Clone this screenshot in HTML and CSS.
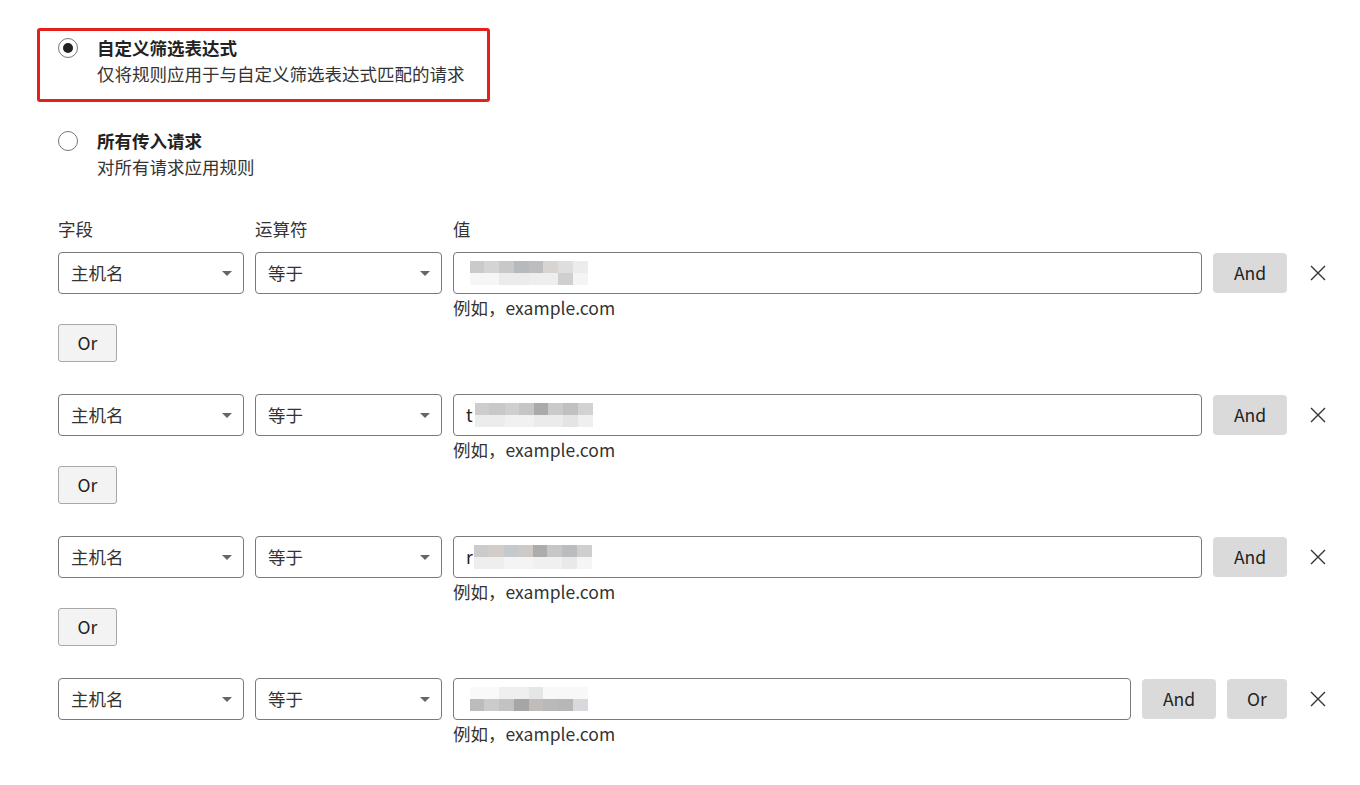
FILE: index.html
```html
<!DOCTYPE html>
<html lang="zh-CN">
<head>
  <meta charset="UTF-8">
  <meta name="viewport" content="width=device-width, initial-scale=1.0">
  <title>自定义筛选表达式</title>
  <link rel="stylesheet" href="styles.css">
</head>
<body>
  <div class="page">
    <div class="options">
      <label class="option selected">
        <span class="radio checked"></span>
        <span class="option-text">
          <span class="option-title">自定义筛选表达式</span>
          <span class="option-desc">仅将规则应用于与自定义筛选表达式匹配的请求</span>
        </span>
      </label>
      <label class="option">
        <span class="radio"></span>
        <span class="option-text">
          <span class="option-title">所有传入请求</span>
          <span class="option-desc">对所有请求应用规则</span>
        </span>
      </label>
    </div>

    <div class="builder">
      <div class="labels">
        <span class="col-field">字段</span>
        <span class="col-op">运算符</span>
        <span class="col-value">值</span>
      </div>

      <div class="group">
        <div class="row">
          <div class="select col-field">主机名<span class="caret"></span></div>
          <div class="select col-op">等于<span class="caret"></span></div>
          <div class="col-value">
            <div class="input"><span class="masked m1"></span></div>
            <div class="hint">例如，example.com</div>
          </div>
          <button class="btn btn-and">And</button>
          <button class="remove"><svg width="16" height="16" viewBox="0 0 16 16"><path d="M1 1L15 15M15 1L1 15" stroke="#333" stroke-width="1.4" fill="none"/></svg></button>
        </div>
        <button class="btn-or">Or</button>
      </div>

      <div class="group">
        <div class="row">
          <div class="select col-field">主机名<span class="caret"></span></div>
          <div class="select col-op">等于<span class="caret"></span></div>
          <div class="col-value">
            <div class="input">t<span class="masked m2"></span></div>
            <div class="hint">例如，example.com</div>
          </div>
          <button class="btn btn-and">And</button>
          <button class="remove"><svg width="16" height="16" viewBox="0 0 16 16"><path d="M1 1L15 15M15 1L1 15" stroke="#333" stroke-width="1.4" fill="none"/></svg></button>
        </div>
        <button class="btn-or">Or</button>
      </div>

      <div class="group">
        <div class="row">
          <div class="select col-field">主机名<span class="caret"></span></div>
          <div class="select col-op">等于<span class="caret"></span></div>
          <div class="col-value">
            <div class="input">r<span class="masked m3"></span></div>
            <div class="hint">例如，example.com</div>
          </div>
          <button class="btn btn-and">And</button>
          <button class="remove"><svg width="16" height="16" viewBox="0 0 16 16"><path d="M1 1L15 15M15 1L1 15" stroke="#333" stroke-width="1.4" fill="none"/></svg></button>
        </div>
        <button class="btn-or">Or</button>
      </div>

      <div class="group last">
        <div class="row">
          <div class="select col-field">主机名<span class="caret"></span></div>
          <div class="select col-op">等于<span class="caret"></span></div>
          <div class="col-value">
            <div class="input"><span class="masked m4"></span></div>
            <div class="hint">例如，example.com</div>
          </div>
          <button class="btn btn-and">And</button>
          <button class="btn btn-or-inline">Or</button>
          <button class="remove"><svg width="16" height="16" viewBox="0 0 16 16"><path d="M1 1L15 15M15 1L1 15" stroke="#333" stroke-width="1.4" fill="none"/></svg></button>
        </div>
      </div>
    </div>
  </div>
</body>
</html>
```

FILE: styles.css
```css
body {
  margin: 0;
  background: #fff;
  color: #333;
  font-family: "Noto Sans CJK SC", "Liberation Sans", sans-serif;
  font-size: 17.5px;
  line-height: 26px;
}

.page {
  padding: 28px 22px 0 37px;
}

/** Radio options **/

.options {
  display: flex;
  flex-direction: column;
  gap: 19px;
}

.option {
  display: flex;
  align-items: flex-start;
  gap: 19px;
  width: 453px;
  box-sizing: border-box;
  padding: 4px 0 12px 18px;
  border: 3px solid transparent;
  border-radius: 3px;
}

.option.selected {
  border-color: #e3211b;
}

.radio {
  flex: none;
  width: 20px;
  height: 20px;
  margin-top: 3px;
  box-sizing: border-box;
  border: 1px solid #777;
  border-radius: 50%;
  display: flex;
  align-items: center;
  justify-content: center;
}

.radio.checked::after {
  content: "";
  width: 10px;
  height: 10px;
  border-radius: 50%;
  background: #222;
}

.option-text {
  display: flex;
  flex-direction: column;
}

.option-title {
  font-weight: bold;
  color: #222;
}

/** Expression builder **/

.builder {
  padding: 21px 0 0 21px;
}

.labels,
.row {
  display: flex;
  gap: 11px;
}

.labels {
  margin-bottom: 10px;
}

.col-field {
  width: 186px;
  flex: none;
}

.col-op {
  width: 187px;
  flex: none;
}

.col-value {
  flex: 1;
}

.group {
  margin-bottom: 32px;
}

.select {
  position: relative;
  height: 42px;
  box-sizing: border-box;
  padding: 0 12px;
  border: 1px solid #7a7a7a;
  border-radius: 4px;
  line-height: 40px;
  color: #333;
}

.caret {
  position: absolute;
  right: 11px;
  top: 18px;
  border-left: 5px solid transparent;
  border-right: 5px solid transparent;
  border-top: 5px solid #666;
}

.input {
  height: 42px;
  box-sizing: border-box;
  padding: 0 12px;
  border: 1px solid #7a7a7a;
  border-radius: 4px;
  display: flex;
  align-items: center;
  color: #222;
}

.hint {
  margin-top: 2px;
  line-height: 24px;
}

.masked {
  display: inline-block;
  width: 118px;
  height: 24px;
  margin-left: 4px;
}

.m1 {
  margin-left: 4px;
  background:
    linear-gradient(90deg, #cacaca 0 12%, #d4d4d4 12% 25%, #c8c8c8 25% 37%, #b6b9bd 37% 50%, #bdbdc0 50% 62%, #d8d4d2 62% 75%, #dedede 75% 87%, #ececec 87%) top / 100% 50% no-repeat,
    linear-gradient(90deg, #f6f6f6 0 25%, #ebebeb 25% 50%, #eeeeee 50% 75%, #cfcfcf 75% 87%, #f4f4f4 87%) bottom / 100% 50% no-repeat;
}

.m2 {
  margin-left: 2px;
  background:
    linear-gradient(90deg, #cdcdcd 0 12%, #c8c8c8 12% 25%, #cfcfcf 25% 37%, #c5c5c5 37% 50%, #aaaaaa 50% 62%, #cacaca 62% 75%, #c0c0c0 75% 87%, #d2d2d2 87%) top / 100% 50% no-repeat,
    linear-gradient(90deg, #ececec 0 25%, #f1f1f1 25% 50%, #ebebeb 50% 75%, #e4e4e4 75% 87%, #efefef 87%) bottom / 100% 50% no-repeat;
}

.m3 {
  margin-left: 1px;
  background:
    linear-gradient(90deg, #cbcbcb 0 12%, #d2cdca 12% 25%, #c4c9ce 25% 37%, #cdc9c6 37% 50%, #acacac 50% 62%, #c6c6c6 62% 75%, #babcbe 75% 87%, #cfcfcf 87%) top / 100% 50% no-repeat,
    linear-gradient(90deg, #eeeeee 0 25%, #f4f4f4 25% 50%, #f0f0f0 50% 75%, #e9e9e9 75% 87%, #f5f5f5 87%) bottom / 100% 50% no-repeat;
}

.m4 {
  margin-left: 4px;
  background:
    linear-gradient(90deg, #f9f9f9 0 25%, #efefef 25% 50%, #e6e6e6 50% 62%, #f8f8f8 62%) top / 100% 50% no-repeat,
    linear-gradient(90deg, #bcbcbc 0 12%, #cbcbcb 12% 25%, #c2c2c2 25% 37%, #a6a6a8 37% 50%, #bfbcba 50% 62%, #b9b9b9 62% 75%, #b8b7b6 75% 87%, #d8d9dc 87%) bottom / 100% 50% no-repeat;
}

.btn {
  flex: none;
  height: 40px;
  margin-top: 1px;
  border: none;
  border-radius: 4px;
  background: #dadada;
  color: #222;
  font: inherit;
  line-height: 40px;
  padding: 0;
}

.btn-and {
  width: 74px;
}

.btn-or-inline {
  width: 60px;
}

.remove {
  flex: none;
  width: 40px;
  height: 42px;
  padding: 0;
  border: none;
  background: none;
  display: flex;
  align-items: center;
  justify-content: center;
}

.btn-or {
  display: block;
  margin-top: 4px;
  width: 59px;
  height: 38px;
  padding: 0;
  border: 1px solid #a8a8a8;
  border-radius: 3px;
  background: #f3f3f3;
  color: #222;
  font: inherit;
  line-height: 36px;
}
```
